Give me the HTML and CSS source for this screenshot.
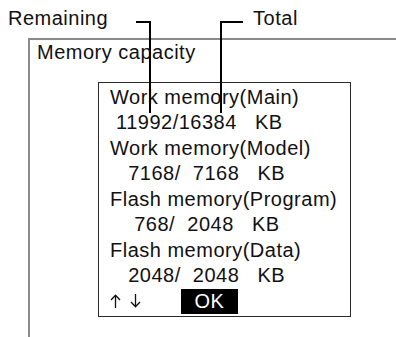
FILE: index.html
```html
<!DOCTYPE html>
<html>
<head>
<meta charset="utf-8">
<link rel="stylesheet" href="styles.css">
</head>
<body>
<div class="page">
  <div class="labels">
    <span class="label label-remaining">Remaining</span>
    <span class="label label-total">Total</span>
  </div>
  <div class="frame">
    <div class="title">Memory capacity</div>
    <div class="dialog">
      <div class="line">Work memory(Main)</div>
      <div class="line num"> 11992/16384   KB</div>
      <div class="line">Work memory(Model)</div>
      <div class="line num">   7168/  7168   KB</div>
      <div class="line">Flash memory(Program)</div>
      <div class="line num">    768/  2048   KB</div>
      <div class="line">Flash memory(Data)</div>
      <div class="line num">   2048/  2048   KB</div>
      <div class="bottom">
        <span class="arrows" aria-label="↑↓">
          <svg class="arrow" width="11" height="14" viewBox="0 0 11 14"><path d="M5.5 14V1.2M1 6L5.5 1.2L10 6" fill="none" stroke="#111" stroke-width="1.3"/></svg>
          <svg class="arrow" width="11" height="14" viewBox="0 0 11 14"><path d="M5.5 0V12.8M1 8L5.5 12.8L10 8" fill="none" stroke="#111" stroke-width="1.3"/></svg>
        </span>
        <span class="ok">OK</span>
      </div>
    </div>
  </div>
  <div class="leader leader-rem-h"></div>
  <div class="leader leader-rem-v"></div>
  <div class="leader leader-tot-h"></div>
  <div class="leader leader-tot-v"></div>
</div>
</body>
</html>
```
FILE: styles.css
```css
html, body {
  margin: 0;
  padding: 0;
  background: #fff;
}
body {
  font-family: "Liberation Sans", Arial, sans-serif;
  font-size: 20px;
  letter-spacing: 0.5px;
  color: #111;
  line-height: 25.5px;
}
.page {
  position: relative;
  width: 396px;
  height: 337px;
  overflow: hidden;
  display: flex;
  flex-direction: column;
}
.labels {
  height: 38px;
  box-sizing: border-box;
  padding: 6px 0 0 8px;
  display: flex;
  white-space: nowrap;
}
.label-total {
  margin-left: 145px;
}
.frame {
  flex: 1;
  margin-left: 28px;
  border-top: 2px solid #8a8a8a;
  border-left: 2px solid #8a8a8a;
}
.title {
  padding-left: 7px;
}
.dialog {
  margin: 16.5px 0 0 68px;
  width: 253px;
  box-sizing: border-box;
  border: 1.5px solid #2a2a2a;
  padding: 1.5px 0 2px 11px;
}
.line {
  white-space: pre;
}
.bottom {
  display: flex;
  align-items: center;
  height: 25.5px;
}
.arrows {
  display: flex;
  gap: 9px;
  align-items: center;
}
.arrow {
  display: block;
}
.ok {
  margin-left: 40px;
  background: #000;
  color: #fff;
  width: 57px;
  height: 25px;
  line-height: 25px;
  text-align: center;
}
.leader {
  position: absolute;
  background: #000;
}
.leader-rem-h {
  left: 136px;
  top: 21px;
  width: 15px;
  height: 2px;
}
.leader-rem-v {
  left: 149px;
  top: 21px;
  width: 2px;
  height: 92px;
}
.leader-tot-h {
  left: 220px;
  top: 21px;
  width: 23px;
  height: 2px;
}
.leader-tot-v {
  left: 220px;
  top: 21px;
  width: 2px;
  height: 92px;
}
```
